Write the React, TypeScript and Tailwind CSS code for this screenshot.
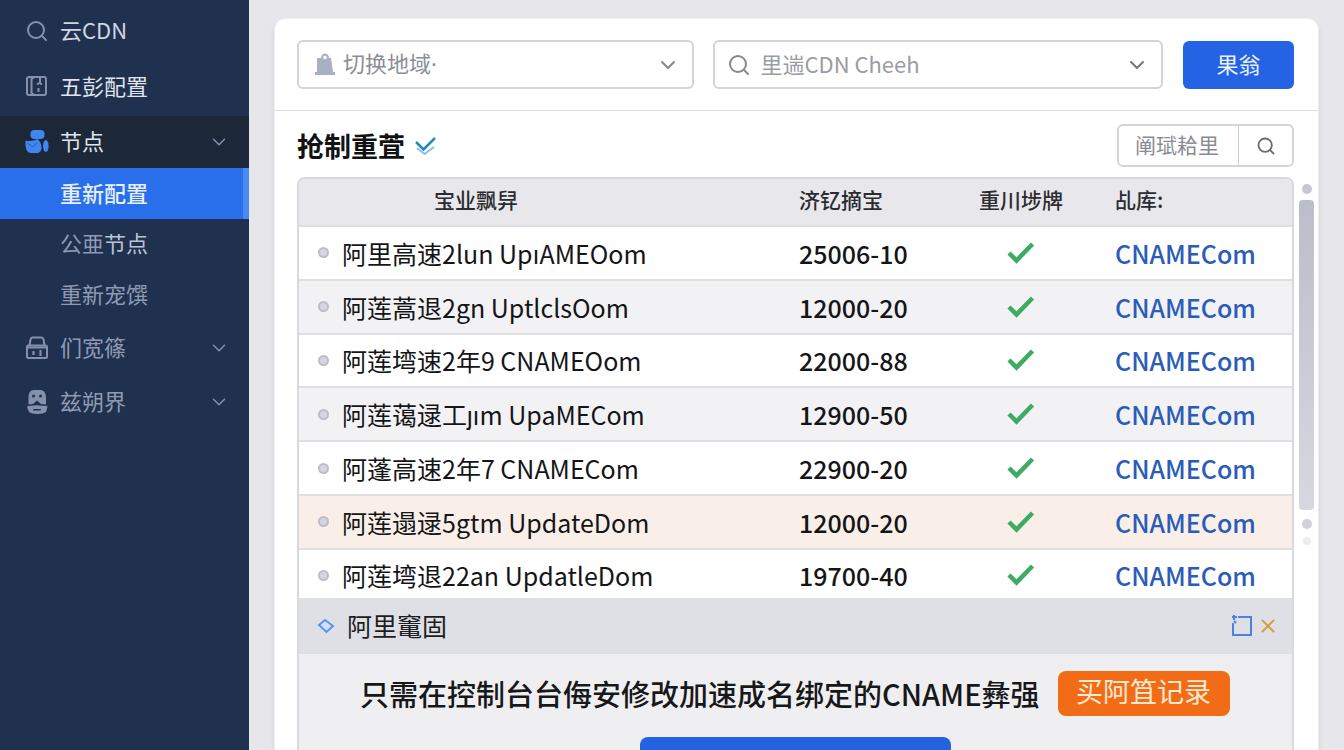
import React from "react";
import { ChevronDown, Search, X } from "lucide-react";

interface Row {
  id: number;
  name: string;
  code: string;
  color: string;
}

const rows: Row[] = [
  { id: 1, name: "阿里高速2lun UpıAMEOom", code: "25006-10", color: "bg-white" },
  { id: 2, name: "阿莲蒿退2gn UptlclsOom", code: "12000-20", color: "bg-[#f2f2f4]" },
  { id: 3, name: "阿莲塆速2年9 CNAMEOom", code: "22000-88", color: "bg-white" },
  { id: 4, name: "阿莲蔼逯工ȷım UpaMECom", code: "12900-50", color: "bg-[#f2f2f5]" },
  { id: 5, name: "阿蓬高速2年7 CNAMECom", code: "22900-20", color: "bg-white" },
  { id: 6, name: "阿莲遢逯5gtm UpdateDom", code: "12000-20", color: "bg-[#f9efe8]" },
  { id: 7, name: "阿莲塆退22an UpdatleDom", code: "19700-40", color: "bg-white" },
];

const RouteIcon = () => (
  <svg className="size-6" viewBox="0 0 24 24" fill="none" stroke="#8591ac" strokeWidth="2">
    <rect x="2" y="2" width="19" height="18" rx="2" />
    <path d="M9.500 2 6.500 4v14l3 2M12 9.500l3-2V3M15 8l2 1.500M13.500 13v4" />
  </svg>
);

const NodeIcon = () => (
  <svg className="size-6" viewBox="0 0 24 24" fill="#3f86ee">
    <rect x="5.500" y="0" width="14" height="9" rx="4" />
    <path d="M.5 10.500c5 1.200 9 .2 12-1.500 2.500 2 4 5 4 9 0 3.500-2 5-5 5H6c-4 0-6-4-5.500-12.500Z" />
    <ellipse cx="20.800" cy="16" rx="2.800" ry="6" />
    <path d="m2.500 13 5.500 4 4-4" fill="none" stroke="#1f5fc9" />
  </svg>
);

const LockIcon = () => (
  <svg className="size-6" viewBox="0 0 24 24" fill="none" stroke="#8591ac" strokeWidth="2">
    <path d="M4.500 9.500 5.500 3.500C5.800 2 6.500 1.500 7.500 1.500h9c1 0 1.700.5 2 2l1 6" />
    <rect x="2" y="9.500" width="20" height="12.500" rx="1.500" />
    <path d="M3 11.500h18" />
    <path d="M8.500 15v4M15.500 14v6" strokeWidth="2.200" />
  </svg>
);

const GhostIcon = () => (
  <svg className="size-6" viewBox="0 0 24 24" fill="#8591ac">
    <path d="M9 0h6c4 0 6 3.500 6 7.500V15l1.500 2-1.500 5c-3 2.500-14 2.500-17 0l-2-5L3.500 15V7.500C3.500 3.500 5 0 9 0Z" />
    <g fill="#22314f">
      <circle cx="8.500" cy="6" r="1.500" />
      <circle cx="15.500" cy="6" r="1.500" />
      <path d="m12 10.500 4 3.500 5 .5V16l-9-.8-9 .8v-1.500l5-.5Z" />
      <rect x="8" y="19" width="8" height="1.500" rx=".7" />
    </g>
  </svg>
);

const BagIcon = () => (
  <svg className="h-6 w-5 shrink-0" viewBox="0 0 20 24" fill="#a9b0c6">
    <path d="M2 5h4c0-6 8-6 8 0h2l2 14h2v3H0v-3h2Z" />
    <circle cx="10" cy="4.500" r="1.800" fill="#fff" />
  </svg>
);

const CheckIcon = () => (
  <svg className="ml-7 h-6 w-7" viewBox="0 0 28 24" fill="none" stroke="#3dab63" strokeWidth="4.500" role="img" aria-label="已启用">
    <path d="m2 12 7.500 7.500L25.500 3" />
  </svg>
);

interface NavItemProps {
  label: string;
  icon: React.ReactNode;
  className: string;
  arrow?: boolean;
}

const NavItem = ({ label, icon, className, arrow }: NavItemProps) => (
  <a href="#" className={`flex items-center pr-[19px] pl-[25px] text-[22px] ${className}`}>
    {icon}
    <span className="ml-[11px] flex-1 pb-1">{label}</span>
    {arrow && <ChevronDown className="size-[22px] text-[#8591ac]" strokeWidth={1.6} />}
  </a>
);

const Sidebar = () => (
  <nav className="w-[249px] shrink-0 bg-[#20304f] pt-1">
    <NavItem label="云CDN" icon={<Search className="size-6 text-[#8591ac]" strokeWidth={2} />} className="h-[54px] text-[#cfd5e1]" />
    <NavItem label="五彭配置" icon={<RouteIcon />} className="h-[58px] text-[#dfe4ee]" />
    <NavItem label="节点" icon={<NodeIcon />} className="h-[52px] bg-[#1c2838] text-[#dfe4ee]" arrow />
    <a href="#" aria-current="page" className="flex h-[51px] items-center border-r-[6px] border-[#4a8af6] bg-[#2a6fea] pb-[2px] pl-[60px] text-[22px] font-medium text-[#e6eefc]">
      重新配置
    </a>
    <a href="#" className="flex h-[51px] items-center pb-1 pl-[60px] text-[22px] text-[#8f9ab2]">
      <span>公亜</span>
      <span className="text-[#bac3d4]">节点</span>
    </a>
    <a href="#" className="flex h-[51px] items-center pb-1 pl-[60px] text-[22px] text-[#8f9ab2]">
      重新宠馔
    </a>
    <NavItem label="们宽篠" icon={<LockIcon />} className="h-[54px] text-[#8f9ab2]" arrow />
    <NavItem label="兹朔界" icon={<GhostIcon />} className="h-[54px] text-[#8f9ab2]" arrow />
  </nav>
);

const Toolbar = () => (
  <div className="flex items-center border-b border-[#dedfe2] py-[21px] pr-6 pl-[22px]">
    <label className="flex h-[49px] flex-[365] items-center rounded-md border-2 border-[#d4d4d8] pr-3 pl-4">
      <BagIcon />
      <select
        aria-label="切换地域"
        className="ml-2 w-full appearance-none bg-transparent pb-[2px] font-['Noto_Sans','Noto_Sans_CJK_SC',sans-serif] text-[22px] text-[#8c8e96] outline-none"
      >
        <option>切换地域·</option>
      </select>
      <ChevronDown className="size-6 shrink-0 text-[#85878d]" strokeWidth={2} />
    </label>
    <label className="ml-[19px] flex h-[49px] flex-[421] items-center rounded-md border-2 border-[#d4d4d8] pr-3 pl-3">
      <Search className="size-6 shrink-0 text-[#85878d]" strokeWidth={2} />
      <input
        aria-label="搜索CDN"
        placeholder="里遄CDN Cheeh"
        className="ml-[9px] w-full bg-transparent pb-[2px] text-[22px] outline-none placeholder:text-[#9a9ca3]"
      />
      <ChevronDown className="size-6 shrink-0 text-[#75777d]" strokeWidth={2} />
    </label>
    <button className="ml-5 h-[48px] w-[111px] rounded-md bg-[#2463e3] pb-[2px] text-[22px] text-[#eaf1ff]">果翁</button>
  </div>
);

const NoticePanel = () => (
  <section className="flex-1 bg-[#efeff1]">
    <header className="flex h-14 items-center bg-[#dfe0e6] pr-[13px] pl-[18px]">
      <svg className="h-5 w-[18px]" viewBox="0 0 18 20" fill="#cfe0fb" stroke="#5b93ee" strokeWidth="2">
        <path d="m2 9 6-5 8 6-6.500 6Z" />
      </svg>
      <h2 className="ml-3 flex-1 text-[25px] text-[#1c1d20]">阿里竃固</h2>
      <button aria-label="最大化">
        <svg className="h-6 w-[22px]" viewBox="0 0 22 24" fill="none" stroke="#4c82e2" strokeWidth="2">
          <path d="M7 3h13v18H2V9M1 3h5M3 1v5M3 7l2 2" />
        </svg>
      </button>
      <button aria-label="关闭" className="ml-1">
        <X className="size-[22px] text-[#d2a04c]" strokeWidth={2.2} />
      </button>
    </header>
    <div className="flex items-center pt-[17px] pl-[61px]">
      <p className="text-[29px] font-medium whitespace-nowrap text-[#17181a]">只需在控制台台侮安修改加速成名绑定的CNAME彝强</p>
      <button className="ml-[18px] h-[45px] w-[172px] rounded-lg bg-[#f26c17] pb-1 text-[27px] whitespace-nowrap text-[#ffe9cf]">买阿笡记录</button>
    </div>
    <button aria-label="前往控制台" className="mx-auto mt-[21px] block h-12 w-[311px] rounded-lg bg-[#2463e0]" />
  </section>
);

export default function App() {
  return (
    <div className="flex h-screen overflow-hidden bg-[#e6e6eb] font-['Noto_Sans_CJK_SC',sans-serif]">
      <Sidebar />
      <main className="mt-[18px] mr-[25px] ml-[25px] flex min-w-0 flex-1 flex-col rounded-t-xl border border-b-0 border-[#efeff2] bg-white shadow-md">
        <Toolbar />
        <div className="flex items-center pt-[13px] pr-6 pb-[10px] pl-[22px]">
          <h1 className="text-[27px] leading-8 font-bold text-[#111214]">抢制重萓</h1>
          <svg className="ml-2 h-6 w-6" viewBox="0 0 24 24" fill="none">
            <path d="m3 8 7.500 7.500L22 4" stroke="#2389bd" strokeWidth="2.500" />
            <path d="m4 14 7.500 6L21 13" stroke="#8bbcf0" strokeWidth="2" />
          </svg>
          <div className="ml-auto flex h-[43px] rounded-md border-2 border-[#d4d4d8]">
            <input
              aria-label="筛选"
              placeholder="阐珷耠里"
              className="w-[120px] border-r border-[#d0d0d4] pb-[2px] pl-4 text-[21px] outline-none placeholder:text-[#8a8c94]"
            />
            <button aria-label="搜索" className="flex w-[53px] items-center justify-center">
              <Search className="size-5 text-[#6b6d73]" strokeWidth={2.2} />
            </button>
          </div>
        </div>
        <div className="flex flex-1 pr-1 pl-[22px]">
          <div className="flex min-w-0 flex-1 flex-col overflow-hidden rounded-t-lg border-2 border-b-0 border-[#d8d9de]">
            <div className="h-[419px] overflow-hidden">
              <table className="h-[422px] w-full table-fixed text-left text-[25px] text-[#141517]">
                <thead>
                  <tr className="h-[47px] bg-[#e7e7ec] text-[21px] text-[#2b2c30]">
                    <th className="pb-1 pl-[135px] font-medium">宝业飘舁</th>
                    <th className="w-[180px] pb-1 font-medium">济钇摘宝</th>
                    <th className="w-[136px] pb-1 font-medium">重川埗牌</th>
                    <th className="w-[177px] pb-1 font-medium">乩库:</th>
                  </tr>
                </thead>
                <tbody>
                  {rows.map((row) => (
                    <tr key={row.id} className={`border-t-2 border-[#dedfe2] ${row.color}`}>
                      <td>
                        <div className="flex items-center pl-[19px] leading-8 whitespace-nowrap">
                          <span className="mr-[13px] size-[11px] rounded-full border-2 border-[#bcbcca] bg-[#d6d6e0]" />
                          {row.name}
                        </div>
                      </td>
                      <td className="leading-8 font-medium">{row.code}</td>
                      <td>
                        <CheckIcon />
                      </td>
                      <td className="leading-8">
                        <a href="#" className="font-medium text-[#2b5cb8]">CNAMECom</a>
                      </td>
                    </tr>
                  ))}
                </tbody>
              </table>
            </div>
            <NoticePanel />
          </div>
          <div className="ml-[5px] flex w-[15px] flex-col items-center pt-[7px]">
            <span className="size-[10px] rounded-full bg-[#c4c5d6]" />
            <span className="mt-[6px] h-[310px] w-full rounded bg-linear-to-b from-[#bcbdca] to-[#d7d8df]" />
            <span className="mt-[9px] size-[10px] rounded-full bg-[#d0d0d7]" />
            <span className="mt-2 size-2 rounded-full bg-[#ececf0]" />
          </div>
        </div>
      </main>
    </div>
  );
}
